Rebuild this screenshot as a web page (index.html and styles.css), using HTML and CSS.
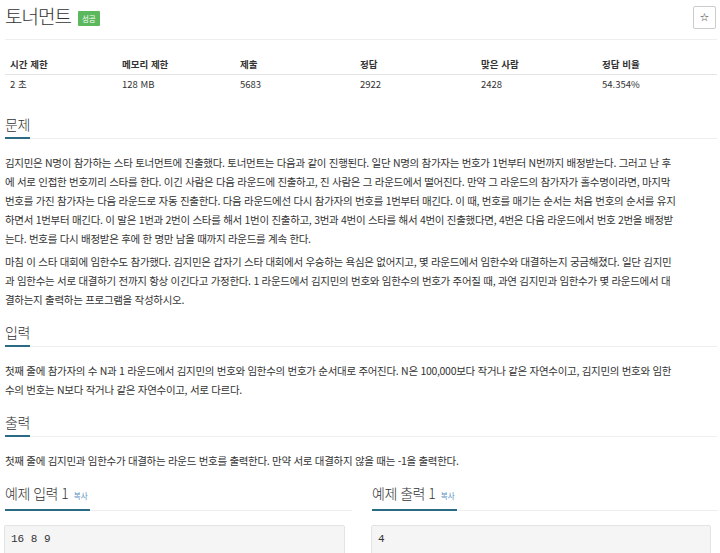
FILE: index.html
```html
<!DOCTYPE html>
<html lang="ko">
<head>
<meta charset="utf-8">
<title>토너먼트</title>
<link rel="stylesheet" href="styles.css">
</head>
<body>
<div class="page">
  <div class="page-header">
    <h1 class="title"><span class="title-text">토너먼트</span><span class="badge">성공</span></h1>
    <button class="star" type="button">☆</button>
  </div>

  <table class="info">
    <thead>
      <tr>
        <th class="c1">시간 제한</th>
        <th class="c2">메모리 제한</th>
        <th class="c3">제출</th>
        <th class="c4">정답</th>
        <th class="c5">맞은 사람</th>
        <th class="c6">정답 비율</th>
      </tr>
    </thead>
    <tbody>
      <tr>
        <td>2 초</td>
        <td>128 MB</td>
        <td>5683</td>
        <td>2922</td>
        <td>2428</td>
        <td>54.354%</td>
      </tr>
    </tbody>
  </table>

  <section class="sec first">
    <h2 class="headline"><span>문제</span></h2>
    <div class="text">
      <p>김지민은 N명이 참가하는 스타 토너먼트에 진출했다. 토너먼트는 다음과 같이 진행된다. 일단 N명의 참가자는 번호가 1번부터 N번까지 배정받는다. 그러고 난 후<br>에 서로 인접한 번호끼리 스타를 한다. 이긴 사람은 다음 라운드에 진출하고, 진 사람은 그 라운드에서 떨어진다. 만약 그 라운드의 참가자가 홀수명이라면, 마지막<br>번호를 가진 참가자는 다음 라운드로 자동 진출한다. 다음 라운드에선 다시 참가자의 번호를 1번부터 매긴다. 이 때, 번호를 매기는 순서는 처음 번호의 순서를 유지<br>하면서 1번부터 매긴다. 이 말은 1번과 2번이 스타를 해서 1번이 진출하고, 3번과 4번이 스타를 해서 4번이 진출했다면, 4번은 다음 라운드에서 번호 2번을 배정받<br>는다. 번호를 다시 배정받은 후에 한 명만 남을 때까지 라운드를 계속 한다.</p>
      <p>마침 이 스타 대회에 임한수도 참가했다. 김지민은 갑자기 스타 대회에서 우승하는 욕심은 없어지고, 몇 라운드에서 임한수와 대결하는지 궁금해졌다. 일단 김지민<br>과 임한수는 서로 대결하기 전까지 항상 이긴다고 가정한다. 1 라운드에서 김지민의 번호와 임한수의 번호가 주어질 때, 과연 김지민과 임한수가 몇 라운드에서 대<br>결하는지 출력하는 프로그램을 작성하시오.</p>
    </div>
  </section>

  <section class="sec">
    <h2 class="headline"><span>입력</span></h2>
    <div class="text">
      <p>첫째 줄에 참가자의 수 N과 1 라운드에서 김지민의 번호와 임한수의 번호가 순서대로 주어진다. N은 100,000보다 작거나 같은 자연수이고, 김지민의 번호와 임한<br>수의 번호는 N보다 작거나 같은 자연수이고, 서로 다르다.</p>
    </div>
  </section>

  <section class="sec">
    <h2 class="headline"><span>출력</span></h2>
    <div class="text">
      <p>첫째 줄에 김지민과 임한수가 대결하는 라운드 번호를 출력한다. 만약 서로 대결하지 않을 때는 -1을 출력한다.</p>
    </div>
  </section>

  <div class="samples">
    <section class="sample">
      <h2 class="headline"><span>예제 입력 1 <a class="copy">복사</a></span></h2>
      <pre class="sample-data">16 8 9</pre>
    </section>
    <section class="sample">
      <h2 class="headline"><span>예제 출력 1 <a class="copy">복사</a></span></h2>
      <pre class="sample-data">4</pre>
    </section>
  </div>
</div>
</body>
</html>
```

FILE: styles.css
```css
html, body {
  margin: 0;
  padding: 0;
  background: #fff;
  overflow: hidden;
}

body {
  font-family: "Noto Sans CJK KR", "Noto Sans", sans-serif;
  color: #333;
}

.page {
  padding: 0 3px 0 5px;
}

/* header */
.page-header {
  display: flex;
  justify-content: space-between;
  align-items: flex-start;
  padding-top: 4px;
  padding-bottom: 10px;
  border-bottom: 1px solid #eee;
}

.title {
  margin: 0;
  display: flex;
  align-items: center;
  height: 24px;
  font-size: 19px;
  line-height: 24px;
  font-weight: 300;
  letter-spacing: -1px;
  color: #333;
}

.badge {
  display: inline-block;
  margin-left: 7px;
  margin-top: 4px;
  padding: 0 4px;
  height: 15px;
  line-height: 15px;
  background: #5cb85c;
  color: #fff;
  font-size: 7.5px;
  font-weight: normal;
  letter-spacing: 0;
  border-radius: 1px;
}

.star {
  margin-top: 2px;
  margin-right: 1px;
  width: 23px;
  height: 23px;
  padding: 0;
  background: #fff;
  border: 1px solid #ccc;
  border-radius: 2px;
  font-family: "DejaVu Sans", sans-serif;
  font-size: 11px;
  line-height: 20px;
  color: #333;
}

/* info table */
.info {
  width: 712px;
  margin-top: 14px;
  border-collapse: collapse;
  table-layout: fixed;
  font-size: 9.5px;
}

.info th,
.info td {
  text-align: left;
  padding: 3px 5px;
  line-height: 14px;
}

.info th {
  font-weight: bold;
  border-bottom: 1px solid #e5e5e5;
}

.info td {
  padding-top: 2px;
  font-weight: normal;
}

.c1 { width: 102px; }
.c2 { width: 108px; }
.c3 { width: 110px; }
.c4 { width: 111px; }
.c5 { width: 111px; }

/* sections */
.sec {
  margin-top: 13px;
}

.sec.first {
  margin-top: 20px;
}

.headline {
  margin: 0;
  font-size: 14px;
  line-height: 20px;
  font-weight: 300;
  letter-spacing: -0.5px;
  color: #333;
  border-bottom: 1px solid #eee;
}

.headline span {
  display: inline-block;
  padding-bottom: 3px;
  margin-bottom: -1px;
  border-bottom: 2px solid #2a6a82;
}

.copy {
  font-size: 7.5px;
  font-weight: normal;
  letter-spacing: 0;
  color: #5a8fbf;
  margin-left: 2px;
  padding-right: 2px;
}

.text {
  margin-top: 14px;
}

.text p {
  margin: 0 0 4px;
  font-size: 10.5px;
  line-height: 19px;
  letter-spacing: -0.3px;
  white-space: nowrap;
}

.text p:last-child {
  margin-bottom: 0;
}

/* samples */
.samples {
  display: grid;
  grid-template-columns: 347px 346px;
  column-gap: 20px;
  margin-top: 13px;
}

.sample-data {
  margin: 14px 7px 0 -1px;
  padding: 6px 6px;
  min-height: 40px;
  background: #f5f5f5;
  border: 1px solid #e3e3e3;
  border-radius: 2px;
  font-family: "Liberation Mono", monospace;
  font-size: 11px;
  line-height: 14px;
  color: #333;
}
```
